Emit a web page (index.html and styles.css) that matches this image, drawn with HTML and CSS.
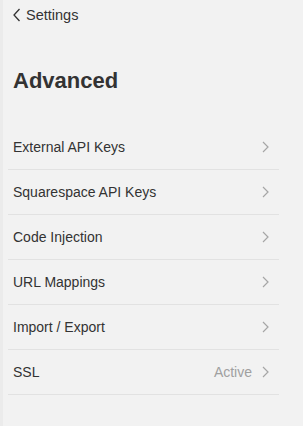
FILE: index.html
```html
<!DOCTYPE html>
<html>
<head>
<meta charset="utf-8">
<link rel="stylesheet" href="styles.css">
</head>
<body>
<div class="panel">
  <a class="back">
    <svg class="back-icon" width="8" height="14" viewBox="0 0 8 14"><path d="M6.5 1 L1 7 L6.5 13" fill="none" stroke="#333" stroke-width="1.3"/></svg>
    <span>Settings</span>
  </a>
  <h1 class="title">Advanced</h1>
  <ul class="list">
    <li class="row"><span class="label">External API Keys</span><span class="right"><svg class="chev" width="7" height="12" viewBox="0 0 7 12"><path d="M1 1 L6 6 L1 11" fill="none" stroke="#a6a6a6" stroke-width="1.2"/></svg></span></li>
    <li class="row"><span class="label">Squarespace API Keys</span><span class="right"><svg class="chev" width="7" height="12" viewBox="0 0 7 12"><path d="M1 1 L6 6 L1 11" fill="none" stroke="#a6a6a6" stroke-width="1.2"/></svg></span></li>
    <li class="row"><span class="label">Code Injection</span><span class="right"><svg class="chev" width="7" height="12" viewBox="0 0 7 12"><path d="M1 1 L6 6 L1 11" fill="none" stroke="#a6a6a6" stroke-width="1.2"/></svg></span></li>
    <li class="row"><span class="label">URL Mappings</span><span class="right"><svg class="chev" width="7" height="12" viewBox="0 0 7 12"><path d="M1 1 L6 6 L1 11" fill="none" stroke="#a6a6a6" stroke-width="1.2"/></svg></span></li>
    <li class="row"><span class="label">Import / Export</span><span class="right"><svg class="chev" width="7" height="12" viewBox="0 0 7 12"><path d="M1 1 L6 6 L1 11" fill="none" stroke="#a6a6a6" stroke-width="1.2"/></svg></span></li>
    <li class="row"><span class="label">SSL</span><span class="right"><span class="status">Active</span><svg class="chev" width="7" height="12" viewBox="0 0 7 12"><path d="M1 1 L6 6 L1 11" fill="none" stroke="#a6a6a6" stroke-width="1.2"/></svg></span></li>
  </ul>
</div>
</body>
</html>
```
FILE: styles.css
```css
html, body {
  margin: 0;
  padding: 0;
  background: #f2f2f2;
}
body {
  font-family: "Liberation Sans", Arial, sans-serif;
  color: #333;
  width: 303px;
  height: 426px;
  overflow: hidden;
}
.panel {
  height: 426px;
  border-left: 3px solid #ebebeb;
  box-sizing: border-box;
  padding: 0 24px 0 5px;
}
.back {
  display: flex;
  align-items: center;
  gap: 5px;
  height: 30px;
  padding-left: 5px;
  font-size: 14.5px;
  color: #333;
}
.back-icon {
  display: block;
}
.title {
  margin: 38px 0 0 0;
  padding-left: 5px;
  font-size: 22px;
  font-weight: bold;
  line-height: 26px;
  color: #333;
}
.list {
  list-style: none;
  margin: 31px 0 0 0;
  padding: 0;
}
.row {
  display: flex;
  align-items: center;
  justify-content: space-between;
  height: 44px;
  border-bottom: 1px solid #e2e2e2;
  padding: 0 10px 0 5px;
  font-size: 14px;
}
.right {
  display: flex;
  align-items: center;
  gap: 10px;
}
.status {
  color: #a0a0a0;
  font-size: 14px;
}
.chev {
  display: block;
}
```
